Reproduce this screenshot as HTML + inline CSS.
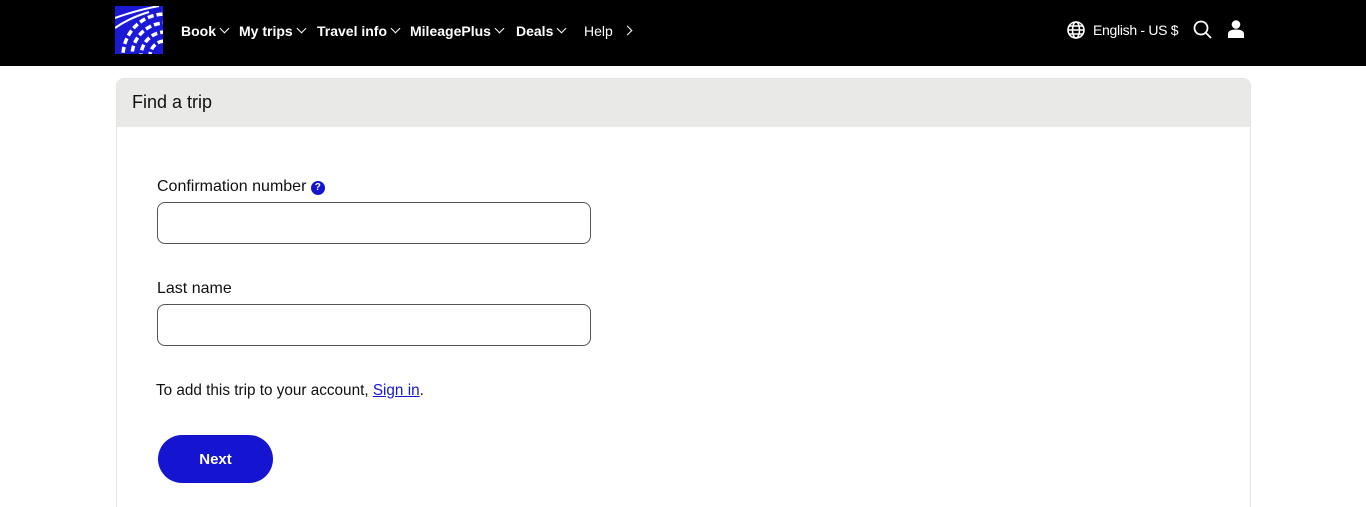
<!DOCTYPE html>
<html style="height:507px;overflow:hidden"><head><meta charset="utf-8"><style>
*{margin:0;padding:0;box-sizing:border-box}
body{width:1366px;height:507px;overflow:hidden;background:#fff;font-family:"Liberation Sans",sans-serif;color:#111;position:relative}
.top{position:absolute;left:0;top:0;width:1366px;height:66px;background:#000}
.logo{position:absolute;left:115px;top:6px;width:48px;height:48px;background:#1a1ad6;overflow:hidden}
.nav{position:absolute;top:23px;color:#fff;font-size:14px;font-weight:bold;white-space:nowrap}
.nav span{position:absolute}
.chev{display:inline-block;width:7px;height:7px;border-right:1.3px solid #fff;border-bottom:1.3px solid #fff;transform:rotate(45deg);margin-left:5px;position:relative;top:-4px}
.card{position:absolute;left:116px;top:78px;width:1135px;height:429px;border:1px solid #e4e4e4;border-bottom:none;border-radius:8px 8px 0 0;overflow:hidden}
.hd{height:48px;background:#e9e9e7;font-size:18px;padding:13px 0 0 15px}
label{position:absolute;left:157px;font-size:15px}
.in{position:absolute;left:157px;width:434px;height:42px;border:1px solid #555;border-radius:8px}
.btn{position:absolute;left:158px;top:435px;width:115px;height:48px;border-radius:24px;background:#1515d1;color:#fff;font-size:15px;font-weight:bold;text-align:center;line-height:49px}
</style></head><body>
<div class="top">
<div class="logo"><svg width="48" height="48" viewBox="0 0 48 48"><g fill="none" stroke="#fff" stroke-width="3.5"><circle cx="50" cy="50" r="42" stroke-dasharray="6 3"/><circle cx="50" cy="50" r="33" stroke-dasharray="6 3"/><circle cx="50" cy="50" r="24" stroke-dasharray="6 3"/><circle cx="50" cy="50" r="15" stroke-dasharray="6 3"/><path d="M0 12 Q22 4 44 0 M0 22 Q14 12 34 6" stroke-width="2"/></g></svg></div>
<div class="nav" style="left:0">
<span style="left:181px">Book<i class="chev"></i></span>
<span style="left:239px">My trips<i class="chev"></i></span>
<span style="left:317px">Travel info<i class="chev"></i></span>
<span style="left:410px">MileagePlus<i class="chev"></i></span>
<span style="left:516px">Deals<i class="chev"></i></span>
<span style="left:584px;font-weight:normal">Help<i class="chev" style="transform:rotate(-45deg);margin-left:11px;top:-2px"></i></span>
</div>
<svg style="position:absolute;left:1067px;top:21px" width="18" height="18" viewBox="0 0 18 18" fill="none" stroke="#fff" stroke-width="1.6"><circle cx="9" cy="9" r="8"/><ellipse cx="9" cy="9" rx="3.5" ry="8"/><path d="M1 9h16M2.5 5h13M2.5 13h13"/></svg>
<div class="nav" style="left:1093px;font-weight:normal;top:22px;letter-spacing:-0.3px">English - US $</div>
<svg style="position:absolute;left:1193px;top:20px" width="19" height="19" viewBox="0 0 19 19" fill="none" stroke="#fff" stroke-width="1.8"><circle cx="8" cy="8" r="6.5"/><path d="M13 13l5 5"/></svg>
<svg style="position:absolute;left:1228px;top:20px" width="16" height="18" viewBox="0 0 16 18" fill="#fff"><circle cx="8" cy="4.5" r="4.3"/><path d="M0 18v-4c0-3 3-4.5 8-4.5s8 1.5 8 4.5v4z"/></svg>
</div>
<div class="card"><div class="hd">Find a trip</div></div>
<label style="top:178px;font-size:16px">Confirmation number <span style="display:inline-block;width:14px;height:14px;border-radius:7px;background:#1515d1;color:#fff;font-size:10px;text-align:center;line-height:14px;font-weight:bold;vertical-align:1px">?</span></label>
<div class="in" style="top:202px"></div>
<label style="top:280px;font-size:16px">Last name</label>
<div class="in" style="top:304px"></div>
<label style="top:382px;left:156px;font-size:15.3px">To add this trip to your account, <span style="color:#1515d1;text-decoration:underline">Sign in</span>.</label>
<div class="btn">Next</div>
</body></html>
